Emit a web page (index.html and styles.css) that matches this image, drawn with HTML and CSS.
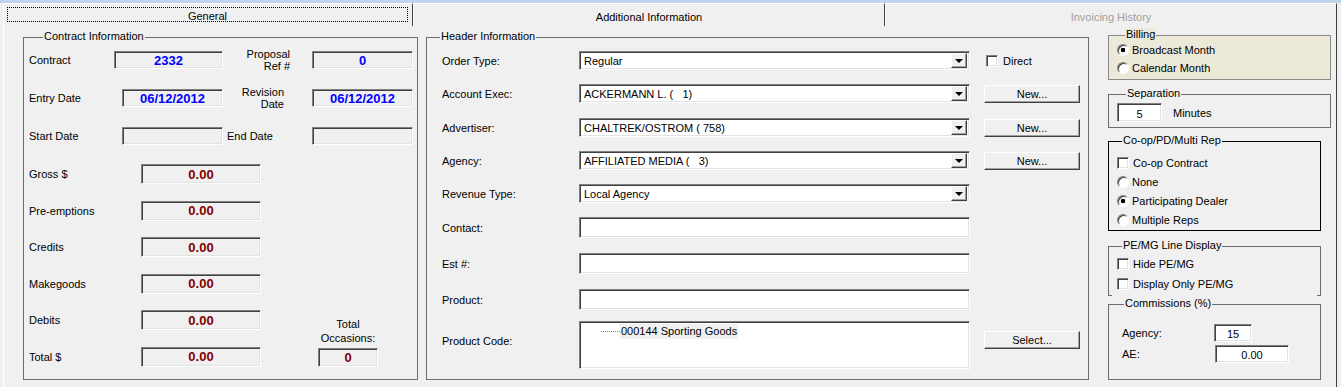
FILE: index.html
```html
<!DOCTYPE html>
<html lang="en">
<head>
    <meta charset="UTF-8">
    <meta name="viewport" content="width=device-width, initial-scale=1.0">
    <title>Contract - General</title>
    <link rel="stylesheet" href="styles.css">
</head>
<body>
    <div class="window">
        <div class="titlebar"></div>

        <div class="tabs">
            <div class="tab tab-general"><span class="focus">General</span></div>
            <div class="tab tab-additional">Additional Information</div>
            <div class="tab tab-invoicing disabled">Invoicing History</div>
        </div>

        <div class="page">
            <!-- left: contract info -->
            <div class="group contract">
                <span class="legend legend-contract">Contract Information</span>

                <div class="crow">
                    <span class="lbl w85">Contract</span>
                    <span class="field blue w109">2332</span>
                    <span class="lbl2 pr22">Proposal<br>Ref #</span>
                    <span class="field blue w101">0</span>
                </div>
                <div class="crow">
                    <span class="lbl w93">Entry Date</span>
                    <span class="field blue w101">06/12/2012</span>
                    <span class="lbl2 pr28">Revision<br>Date</span>
                    <span class="field blue w101">06/12/2012</span>
                </div>
                <div class="crow">
                    <span class="lbl w93">Start Date</span>
                    <span class="field w101"></span>
                    <span class="lbl2 left">End Date</span>
                    <span class="field w101"></span>
                </div>

                <div class="money">
                    <div class="mrow">
                        <span class="lbl w112">Gross $</span>
                        <span class="field red mfield">0.00</span>
                    </div>
                    <div class="mrow">
                        <span class="lbl w112">Pre-emptions</span>
                        <span class="field red mfield">0.00</span>
                    </div>
                    <div class="mrow">
                        <span class="lbl w112">Credits</span>
                        <span class="field red mfield">0.00</span>
                    </div>
                    <div class="mrow">
                        <span class="lbl w112">Makegoods</span>
                        <span class="field red mfield">0.00</span>
                    </div>
                    <div class="tail">
                        <div class="tail-rows">
                            <div class="mrow">
                                <span class="lbl w112">Debits</span>
                                <span class="field red mfield">0.00</span>
                            </div>
                            <div class="mrow">
                                <span class="lbl w112">Total $</span>
                                <span class="field red mfield">0.00</span>
                            </div>
                        </div>
                        <div class="occ">
                            <span class="occ-lbl">Total<br>Occasions:</span>
                            <span class="field red occ-field">0</span>
                        </div>
                    </div>
                </div>
            </div>

            <!-- middle: header info -->
            <div class="group header">
                <span class="legend legend-header">Header Information</span>

                <div class="hrow">
                    <span class="hlbl">Order Type:</span>
                    <div class="combo"><span class="combo-text">Regular</span><span class="drop"><i class="arrow"></i></span></div>
                    <span class="check-label direct"><span class="check"></span>Direct</span>
                </div>
                <div class="hrow">
                    <span class="hlbl">Account Exec:</span>
                    <div class="combo"><span class="combo-text">ACKERMANN L. (   1)</span><span class="drop"><i class="arrow"></i></span></div>
                    <button class="btn">New...</button>
                </div>
                <div class="hrow plus1">
                    <span class="hlbl">Advertiser:</span>
                    <div class="combo"><span class="combo-text">CHALTREK/OSTROM ( 758)</span><span class="drop"><i class="arrow"></i></span></div>
                    <button class="btn">New...</button>
                </div>
                <div class="hrow">
                    <span class="hlbl">Agency:</span>
                    <div class="combo"><span class="combo-text">AFFILIATED MEDIA (   3)</span><span class="drop"><i class="arrow"></i></span></div>
                    <button class="btn">New...</button>
                </div>
                <div class="hrow">
                    <span class="hlbl">Revenue Type:</span>
                    <div class="combo"><span class="combo-text">Local Agency</span><span class="drop"><i class="arrow"></i></span></div>
                </div>
                <div class="hrow tall">
                    <span class="hlbl">Contact:</span>
                    <span class="textbox"></span>
                </div>
                <div class="hrow tall plus1">
                    <span class="hlbl">Est #:</span>
                    <span class="textbox"></span>
                </div>
                <div class="hrow tall plus1">
                    <span class="hlbl">Product:</span>
                    <span class="textbox"></span>
                </div>
                <div class="hrow code">
                    <span class="hlbl">Product Code:</span>
                    <div class="listbox">
                        <div class="tree-item"><span class="tree-line"></span><span class="tree-text">000144 Sporting Goods</span></div>
                    </div>
                    <button class="btn select">Select...</button>
                </div>
            </div>

            <!-- right: options -->
            <div class="side">
                <div class="group billing">
                    <span class="legend legend-billing">Billing</span>
                    <div class="opt"><span class="radio on"></span>Broadcast Month</div>
                    <div class="opt"><span class="radio"></span>Calendar Month</div>
                </div>

                <div class="group sep">
                    <span class="legend legend-sep">Separation</span>
                    <div class="sep-row">
                        <span class="num w45">5</span>
                        <span class="minutes">Minutes</span>
                    </div>
                </div>

                <div class="group coop">
                    <span class="legend legend-small">Co-op/PD/Multi Rep</span>
                    <div class="opt"><span class="check"></span>Co-op Contract</div>
                    <div class="opt"><span class="radio"></span>None</div>
                    <div class="opt"><span class="radio on"></span>Participating Dealer</div>
                    <div class="opt"><span class="radio"></span>Multiple Reps</div>
                </div>

                <div class="group pemg">
                    <span class="legend legend-small">PE/MG Line Display</span>
                    <div class="opt"><span class="check"></span>Hide PE/MG</div>
                    <div class="opt"><span class="check"></span>Display Only PE/MG</div>
                </div>

                <div class="group comm">
                    <span class="legend legend-comm">Commissions (%)</span>
                    <div class="comm-row">
                        <span class="comm-lbl w92">Agency:</span>
                        <span class="num w38">15</span>
                    </div>
                    <div class="comm-row">
                        <span class="comm-lbl w93">AE:</span>
                        <span class="num w74">0.00</span>
                    </div>
                </div>
            </div>
        </div>
    </div>
</body>
</html>
```

FILE: styles.css
```css
body {
    margin: 0;
    font-family: "Liberation Sans", Arial, sans-serif;
    font-size: 11px;
    color: #000;
    background-color: #f0f0f0;
}
.window {
    width: 1341px;
    height: 387px;
    overflow: hidden;
    background-color: #f0f0f0;
}
.titlebar {
    height: 3px;
    background-color: #bfd5ec;
}

/* tabs */
.tabs {
    display: flex;
    margin-left: 3px;
    height: 23px;
}
.tab {
    box-sizing: border-box;
    display: flex;
    justify-content: center;
    align-items: center;
    height: 23px;
    padding-top: 3px;
    border-top: 1px solid #fff;
    border-right: 1px solid #404040;
}
.tab-general {
    width: 410px;
    border-left: 1px solid #fff;
    padding: 3px 4px 0 3px;
    align-items: flex-start;
}
.tab-additional { width: 472px; border-left: 1px solid #fff; }
.tab-invoicing { width: 452px; border-left: 1px solid #fff; }
.tab.disabled { color: #a0a0a0; }
.focus {
    box-sizing: border-box;
    display: flex;
    justify-content: center;
    align-items: center;
    width: 401px;
    height: 15px;
    padding-top: 3px;
    border: 1px dotted #000;
}

/* tab page */
.page {
    box-sizing: border-box;
    display: flex;
    align-items: flex-start;
    width: 1334px;
    height: 361px;
    margin-left: 3px;
    padding: 9px 0 0 19px;
    border-left: 1px solid #fff;
    border-right: 1px solid #404040;
}

/* group boxes */
.group {
    position: relative;
    box-sizing: border-box;
    flex: none;
    border: 1px solid #6d6d6d;
}
.legend {
    position: absolute;
    top: -8px;
    padding: 0 1px;
    line-height: 13px;
    white-space: nowrap;
    background-color: #f0f0f0;
}
.legend-contract { left: 19px; }
.legend-header { left: 13px; }
.legend-billing { left: 16px; background-color: #ece9d8; }
.legend-sep { left: 17px; }
.legend-small { left: 13px; }
.legend-comm { left: 15px; }

/* sunken fields */
.field, .combo, .textbox, .listbox, .num, .check {
    box-sizing: border-box;
    flex: none;
    border: 1px solid;
    border-color: #808080 #fff #fff #808080;
    box-shadow: inset 1px 1px 0 #404040, inset -1px -1px 0 #e3e3e3;
}
.field {
    display: flex;
    justify-content: center;
    align-items: center;
    height: 18px;
    font-size: 13px;
    font-weight: bold;
    background-color: #f0f0f0;
}
.blue { color: #0000ff; }
.red { color: #800000; }

/* contract group */
.contract {
    width: 395px;
    height: 343px;
    margin-top: 2px;
    padding: 13px 0 0 5px;
}
.crow {
    display: flex;
    align-items: center;
    height: 18px;
}
.crow + .crow { margin-top: 20px; }
.lbl { flex: none; white-space: nowrap; }
.lbl2 {
    flex: none;
    box-sizing: border-box;
    width: 89px;
    text-align: right;
    line-height: 12px;
}
.lbl2.left { text-align: left; padding-left: 4px; }
.pr22 { padding-right: 22px; }
.pr28 { padding-right: 28px; }
.w85 { width: 85px; }
.w93 { width: 93px; }
.w101 { width: 101px; }
.w109 { width: 109px; }
.w112 { width: 112px; }

.money {
    display: flex;
    flex-direction: column;
    gap: 16.6px;
    margin-top: 19px;
}
.mrow {
    display: flex;
    align-items: center;
    height: 20px;
}
.mfield { width: 120px; height: 20px; }
.tail {
    display: flex;
    align-items: flex-end;
}
.tail-rows {
    display: flex;
    flex-direction: column;
    gap: 16.6px;
}
.occ {
    display: flex;
    flex-direction: column;
    align-items: center;
    width: 60px;
    margin-left: 57px;
}
.occ-lbl {
    text-align: center;
    line-height: 14px;
    margin-bottom: 3px;
}
.occ-field { width: 60px; height: 19px; }

/* header group */
.header {
    width: 663px;
    height: 343px;
    margin: 2px 0 0 8px;
    padding: 13px 0 0 15px;
}
.hrow {
    display: flex;
    align-items: center;
    height: 19px;
}
.hrow + .hrow { margin-top: 14px; }
.hrow.tall { height: 21px; }
.hrow.plus1 { margin-top: 15px; }
.hrow.code {
    height: 48px;
    margin-top: 11px;
    align-items: flex-start;
}
.hrow.code .hlbl { margin-top: 14px; }
.hlbl {
    flex: none;
    width: 137px;
}
.combo {
    display: flex;
    align-items: center;
    width: 391px;
    height: 19px;
    padding: 2px;
    background-color: #fff;
}
.combo-text {
    flex: 1;
    padding-left: 2px;
    white-space: pre;
}
.drop {
    box-sizing: border-box;
    display: flex;
    justify-content: center;
    align-items: center;
    width: 16px;
    height: 15px;
    background-color: #f0f0f0;
    border: 1px solid;
    border-color: #fff #404040 #404040 #fff;
    box-shadow: inset -1px -1px 0 #a0a0a0;
}
.arrow {
    width: 0;
    height: 0;
    border-left: 4px solid transparent;
    border-right: 4px solid transparent;
    border-top: 4px solid #000;
}
.textbox {
    width: 391px;
    height: 21px;
    background-color: #fff;
}
.listbox {
    width: 391px;
    height: 48px;
    padding: 2px 0 0 21px;
    background-color: #fff;
}
.tree-item {
    display: flex;
    align-items: center;
    height: 15px;
}
.tree-line {
    width: 19px;
    border-top: 1px dotted #808080;
}
.tree-text {
    padding: 0 1px;
    line-height: 15px;
    background-color: #f0f0f0;
}
.btn {
    box-sizing: border-box;
    flex: none;
    width: 96px;
    height: 18px;
    margin-left: 14px;
    padding: 0;
    font-family: inherit;
    font-size: 11px;
    color: #000;
    background-color: #f0f0f0;
    border: 1px solid;
    border-color: #fff #404040 #404040 #fff;
    box-shadow: inset -1px -1px 0 #a0a0a0;
}
.btn.select { margin-top: 10px; }
.check-label {
    display: flex;
    align-items: center;
}
.direct { margin-left: 16px; }
.direct .check { margin-right: 5px; }

/* right column */
.side {
    display: flex;
    flex-direction: column;
    width: 223px;
    margin-left: 19px;
}
.check {
    width: 12px;
    height: 12px;
    background-color: #fff;
    margin-right: 4px;
}
.radio {
    box-sizing: border-box;
    flex: none;
    width: 12px;
    height: 12px;
    margin-right: 3px;
    border-radius: 50%;
    border: 1px solid;
    border-color: #808080 #fff #fff #808080;
    box-shadow: inset 1px 1px 0 #404040;
    background-color: #fff;
}
.radio.on {
    background: radial-gradient(circle, #000 0, #000 2px, #fff 2.6px);
}
.opt {
    display: flex;
    align-items: center;
    height: 12px;
}
.billing {
    height: 45px;
    padding: 8px 0 0 8px;
    background-color: #ece9d8;
    border-color: #8a8a8a;
}
.billing .opt + .opt { margin-top: 6px; }

.sep {
    height: 34px;
    margin-top: 14px;
    padding: 8px 0 0 8px;
}
.sep-row {
    display: flex;
    align-items: center;
}
.num {
    display: flex;
    justify-content: center;
    align-items: center;
    height: 19px;
    padding-top: 2px;
    background-color: #fff;
}
.w38 { width: 38px; height: 18px; }
.w45 { width: 45px; }
.w74 { width: 74px; height: 18px; }
.minutes { margin-left: 11px; }

.coop {
    width: 213px;
    height: 90px;
    margin-top: 13px;
    padding: 15px 0 0 8px;
    border-color: #000;
}
.coop .opt + .opt { margin-top: 7px; }

.pemg {
    width: 213px;
    height: 50px;
    margin-top: 15px;
    padding: 11px 0 0 8px;
    border-bottom: none;
    background:
        linear-gradient(#6d6d6d, #6d6d6d) left bottom / 3px 1px no-repeat,
        linear-gradient(#6d6d6d, #6d6d6d) right bottom / 3px 1px no-repeat;
}
.pemg .opt + .opt { margin-top: 8px; }

.comm {
    width: 213px;
    height: 76px;
    margin-top: 8px;
    padding: 19px 0 0 13px;
}
.comm-row {
    display: flex;
    align-items: center;
    height: 18px;
}
.comm-row + .comm-row { margin-top: 3px; }
.comm-lbl { flex: none; }
.w92 { width: 92px; }
.w93 { width: 93px; }
```
